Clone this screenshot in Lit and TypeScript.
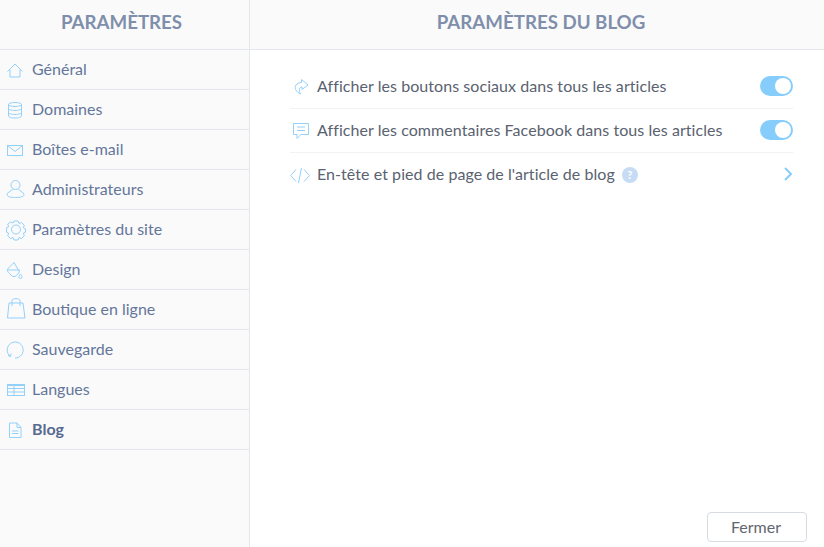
import { LitElement, html, css, svg } from 'lit';
import { customElement } from 'lit/decorators.js';

const icons: Record<string, unknown> = {
  home: svg`<path d="M7.500 13.500 15 6l7.500 7.500M10 11.500v7.500h10v-7.500"/>`,
  db: svg`<ellipse cx="15" cy="6.500" rx="6.500" ry="2"/><path d="M8.500 6.500v11.500c0 1.100 2.900 2 6.500 2s6.500-.9 6.500-2V6.500M8.500 10.500c0 1.100 2.900 2 6.500 2s6.500-.9 6.500-2M8.500 14.500c0 1.100 2.900 2 6.500 2s6.500-.9 6.500-2"/>`,
  mail: svg`<rect x="7.500" y="7.500" width="15" height="10"/><path d="M7.500 7.500 15 13.500l7.500-6"/>`,
  user: svg`<circle cx="15.500" cy="7" r="4.500"/><path d="M12.500 11c-.3 2-5.500 3-5.500 5.500 0 2 3 3 8.500 3s8.500-1 8.500-3c0-2.500-5.200-3.500-5.500-5.500"/>`,
  gear: svg`<circle cx="16" cy="11.500" r="4.500"/><path d="M14 3h4l1 2.500 2.500-1 2.800 2.800-1 2.500 2.200 1v3.400l-2.200 1 1 2.500-2.800 2.800-2.500-1-1 2.500h-4l-1-2.500-2.500 1-2.800-2.800 1-2.500-2.200-1V9.800l2.200-1-1-2.500L10.500 4l2.500 1z"/>`,
  bucket: svg`<path d="M14 4.500 8.500 10c-1.500 1.500-1.500 3 0 4.500l3 3c1.500 1.500 3.500 1.500 5 0l3-3.500zM7.500 12h12.500"/><path d="M20.500 16c-1 1.500-1.500 2-1.500 3a1.500 1.500 0 0 0 3 0c0-1-.5-1.500-1.500-3z"/>`,
  bag: svg`<path d="M9 5h14l2 15H7.500zM12 8V2.500c0-2.500 8-2.500 8 0V8"/>`,
  backup: svg`<path d="M10.500 18.500a8 8 0 1 1 4.500 1.500M8 17.500l2.500 1 .5-3"/>`,
  lang: svg`<rect x="7.500" y="6.500" width="17" height="11"/><path d="M7.500 7.500h17M7.500 10.500h17M7.500 14h17M14 6.500v11"/>`,
  doc: svg`<path d="M9.500 5h7.500l4 4.500v10h-11.500zM17 5v4.500h4M12 13h6.500M12 15.500h6.500"/>`,
  share: svg`<path d="M11.500 3.500 18 9l-6 4.500V11c-3 0-3.500 3-1.500 7-4.500-2-6.500-6-4.500-9 1-1.500 3.500-2.500 5.500-2.500z"/>`,
  chat: svg`<path d="M3.500 3.500h15v11h-7.500l-4 4v-4h-3.500zM7 7h8M7 10.500h8"/>`,
  code: svg`<path d="M6 5.500.8 11.500 6 17.500M11.500 4l-3 15M14 5.500l5.500 6-5.500 6"/>`,
};

const items: [string, string][] = [
  ['home', 'Général'],
  ['db', 'Domaines'],
  ['mail', 'Boîtes e-mail'],
  ['user', 'Administrateurs'],
  ['gear', 'Paramètres du site'],
  ['bucket', 'Design'],
  ['bag', 'Boutique en ligne'],
  ['backup', 'Sauvegarde'],
  ['lang', 'Langues'],
  ['doc', 'Blog'],
];

@customElement('app-root')
export class AppRoot extends LitElement {
  static styles = css`
    :host {
      display: flex;
      height: 547px;
      width: 824px;
      overflow: hidden;
      background: #fff;
      font-family: 'Lato', 'Open Sans', sans-serif;
      font-size: 16px;
      color: #5a6270;
    }
    .side {
      width: 249px;
      flex: none;
      background: #fafafa;
      border-right: 1px solid #e4e7ec;
    }
    .head {
      height: 44px;
      padding-bottom: 5px;
      border-bottom: 1px solid #e4e7ec;
      background: #fafafa;
      display: flex;
      align-items: center;
      justify-content: center;
      font-size: 18.700px;
      font-weight: 700;
      color: #7f8fab;
    }
    .side .head {
      padding-right: 6px;
    }
    .main .head {
      padding-left: 8px;
    }
    .nav-item {
      height: 39px;
      border-bottom: 1px solid #e4e7ec;
      display: flex;
      align-items: center;
      color: #64769a;
    }
    .nav-item svg {
      width: 32px;
      height: 24px;
      flex: none;
    }
    .nav-item.active {
      font-weight: 700;
      color: #566a90;
    }
    .label {
      margin-top: -2px;
    }
    svg {
      fill: none;
      stroke: #93d1fb;
      stroke-width: 1;
    }
    .main {
      flex: 1;
      display: flex;
      flex-direction: column;
    }
    .rows {
      padding: 15px 31px 0 40px;
      letter-spacing: 0.06px;
    }
    .row {
      height: 43px;
      border-bottom: 1px solid #f1f2f4;
      display: flex;
      align-items: center;
    }
    .row:last-child {
      border-bottom: none;
    }
    .row svg {
      width: 27px;
      height: 22px;
      flex: none;
    }
    .grow {
      flex: 1;
    }
    .toggle {
      width: 33px;
      height: 20px;
      margin-top: -1px;
      border-radius: 10px;
      background: #87cdfb;
      position: relative;
    }
    .toggle::after {
      content: '';
      position: absolute;
      right: 2px;
      top: 2px;
      width: 16px;
      height: 16px;
      border-radius: 50%;
      background: #fff;
    }
    .help {
      width: 16px;
      height: 16px;
      margin-left: 7px;
      border-radius: 50%;
      background: #c6dcf5;
      color: #fff;
      font-size: 11px;
      font-weight: 700;
      display: flex;
      align-items: center;
      justify-content: center;
    }
    .row .chev {
      width: 10px;
      height: 16px;
      margin-top: -2px;
      stroke: #87cdfb;
      stroke-width: 2;
    }
    .foot {
      margin-top: auto;
      display: flex;
      justify-content: flex-end;
      padding: 0 17px 5px 0;
    }
    button {
      width: 100px;
      height: 30px;
      padding: 0 2px 2px 0;
      background: #fff;
      border: 1px solid #d7dce2;
      border-radius: 4px;
      font: inherit;
      color: #5f6670;
    }
  `;

  render() {
    return html`
      <div class="side">
        <div class="head">PARAMÈTRES</div>
        ${items.map(([icon, label]) => html`
          <div class="nav-item ${label === 'Blog' ? 'active' : ''}">
            <svg viewBox="0 0 32 24">${icons[icon]}</svg><span class="label">${label}</span>
          </div>
        `)}
      </div>
      <div class="main">
        <div class="head">PARAMÈTRES DU BLOG</div>
        <div class="rows">
          <div class="row">
            <svg viewBox="0 0 27 22">${icons.share}</svg>
            <span class="grow label">Afficher les boutons sociaux dans tous les articles</span>
            <span class="toggle"></span>
          </div>
          <div class="row">
            <svg viewBox="0 0 27 22">${icons.chat}</svg>
            <span class="grow label">Afficher les commentaires Facebook dans tous les articles</span>
            <span class="toggle"></span>
          </div>
          <div class="row">
            <svg viewBox="0 0 27 22">${icons.code}</svg>
            <span class="label">En-tête et pied de page de l'article de blog</span>
            <span class="help">?</span>
            <span class="grow"></span>
            <svg class="chev" viewBox="0 0 10 16"><path d="M2 2l6 6-6 6"/></svg>
          </div>
        </div>
        <div class="foot"><button>Fermer</button></div>
      </div>
    `;
  }
}
